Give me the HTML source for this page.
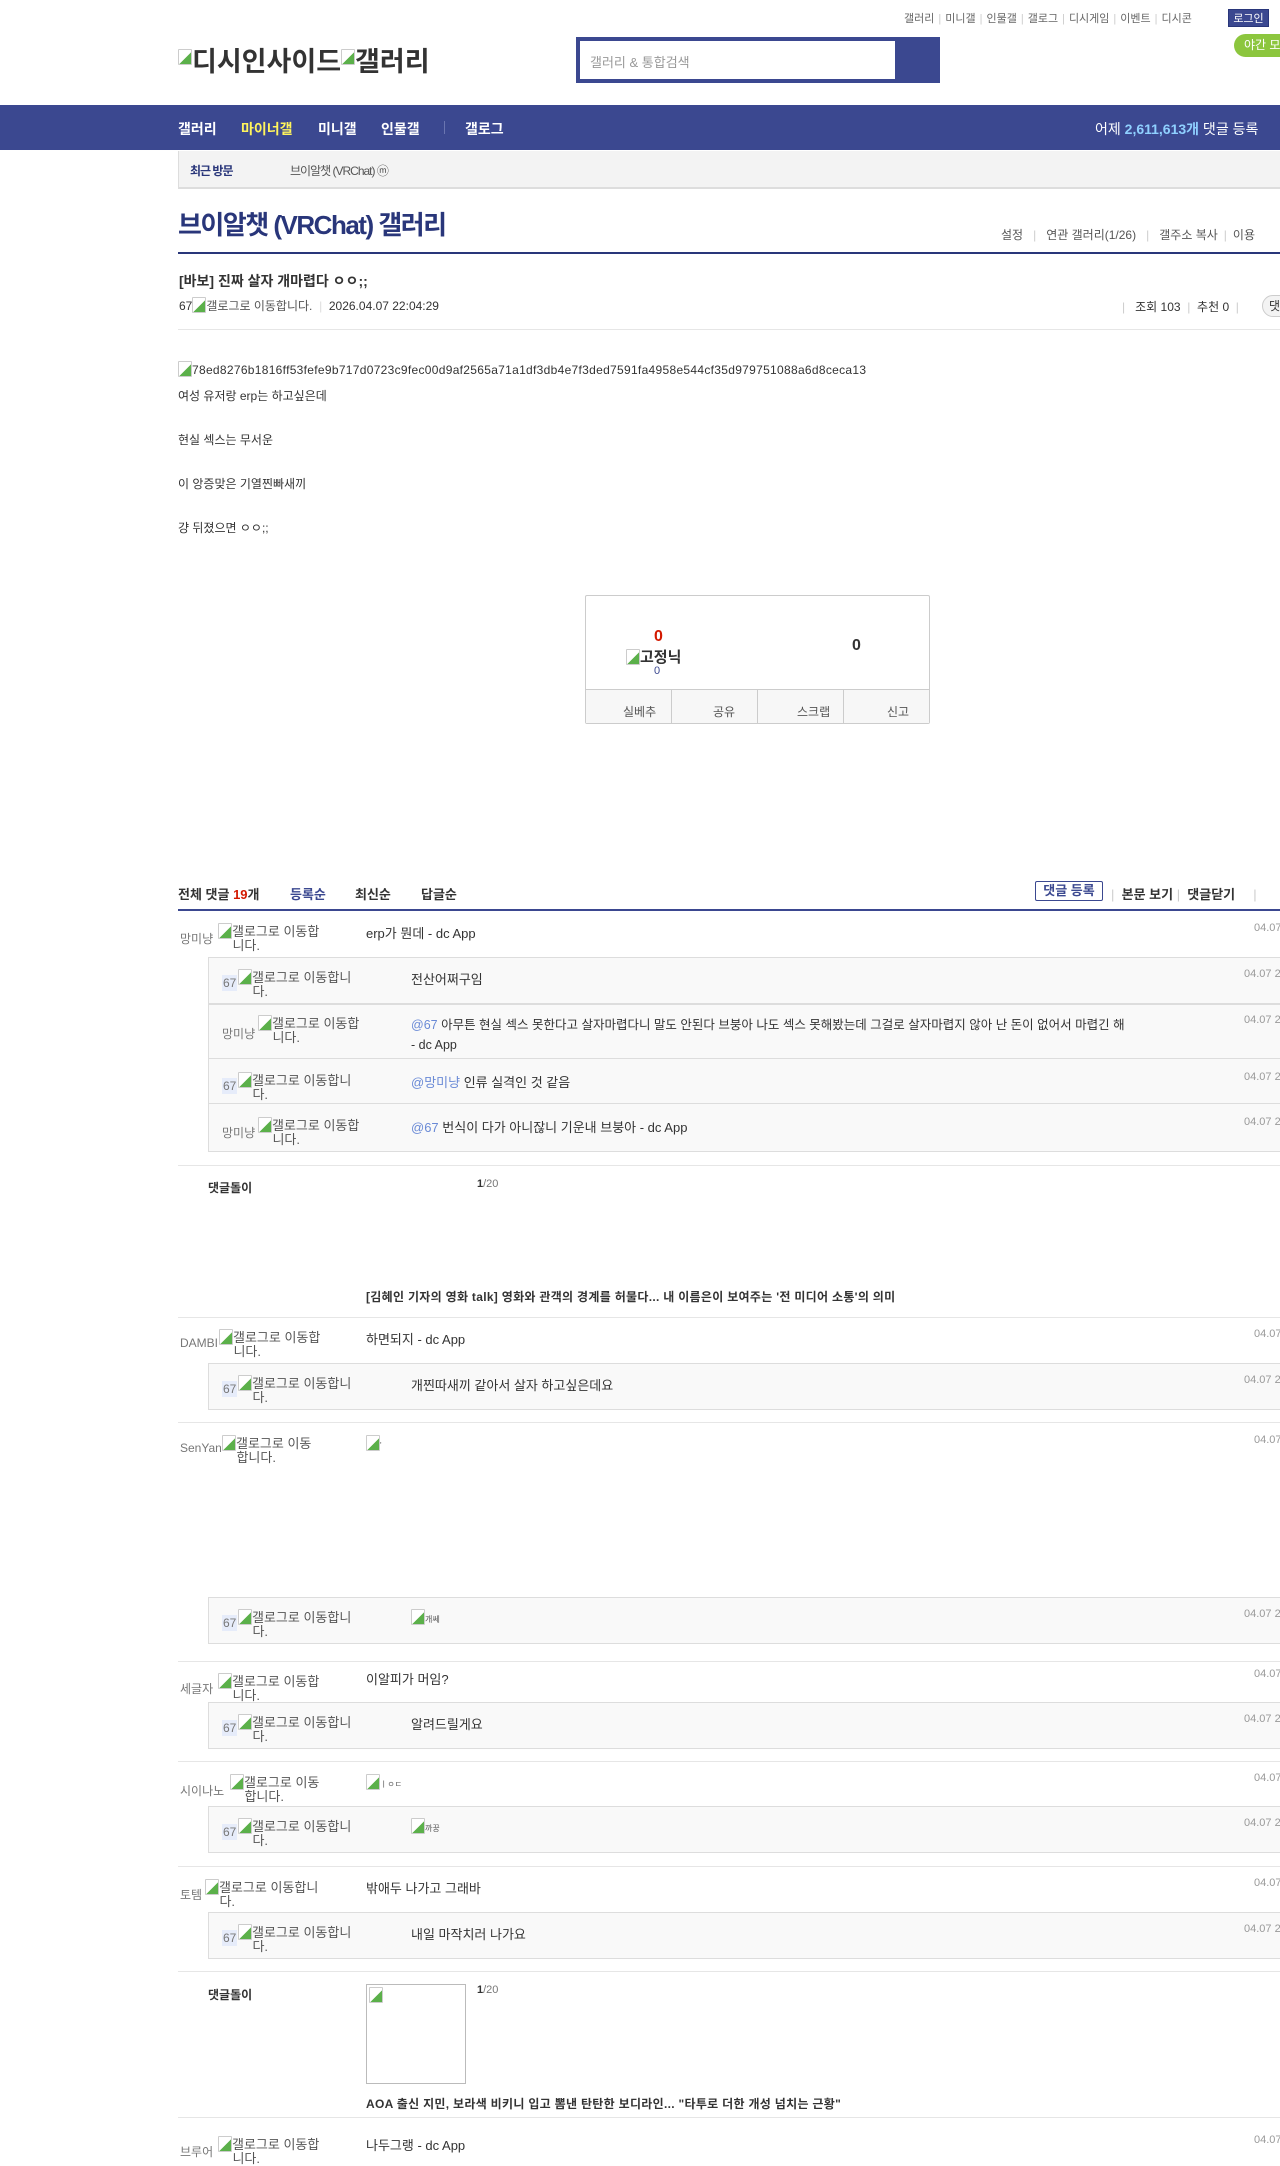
<!DOCTYPE html>
<html><head><meta charset="utf-8">
<style>
*{margin:0;padding:0;box-sizing:border-box}
body{width:1280px;height:2157px;overflow:hidden;position:relative;background:#fff;font-family:"Liberation Sans","Noto Sans CJK KR","NanumGothic",sans-serif;color:#333;font-size:13px}
.a{position:absolute;white-space:nowrap}
.bi{display:inline-block;width:14px;height:16px;border:1px solid #ccc;border-radius:1px;vertical-align:-3px;background:linear-gradient(135deg,#fff 55%,#5bb04a 56%);}
.sep{position:absolute;left:178px;right:0;height:1px;background:#e6e6e6}
.rb{position:absolute;left:208px;right:0;background:#f9f9f9;border:1px solid #ddd;border-right:0}
.nick{position:absolute;left:180px;font-size:12px;color:#777;white-space:nowrap}
.gl{position:absolute;font-size:13px;color:#555;line-height:14px;white-space:normal}
.dt{position:absolute;font-size:11px;color:#999;white-space:nowrap}
.tx{position:absolute;font-size:13px;color:#333;white-space:nowrap}
.m{color:#6a8ad6}
.n67{background:#e6ecfa;color:#777;font-size:12px;padding:1px 1px}
.tl span{color:#ccc;margin:0 4px}
</style></head><body>

<!-- top links -->
<div class="a tl" style="left:904px;top:10px;font-size:11px;color:#666">갤러리<span>|</span>미니갤<span>|</span>인물갤<span>|</span>갤로그<span>|</span>디시게임<span>|</span>이벤트<span>|</span>디시콘</div>
<div class="a" style="left:1228px;top:9px;width:41px;height:18px;background:#3b4890;color:#fff;font-size:11px;text-align:center;line-height:18px;border:1px solid #29367a">로그인</div>
<div class="a" style="left:1234px;top:34px;width:60px;height:23px;background:#8cc63e;border-radius:12px;color:#fff;font-size:12px;line-height:23px;padding-left:10px">야간 모드</div>

<!-- logo -->
<div class="a" style="left:178px;top:40px;font-size:27px;font-weight:bold;color:#333"><span class="bi" style="vertical-align:6px"></span>디시인사이드<span class="bi" style="vertical-align:6px"></span>갤러리</div>

<!-- search -->
<div class="a" style="left:576px;top:37px;width:364px;height:46px;background:#3b4890"></div>
<div class="a" style="left:580px;top:41px;width:315px;height:38px;background:#fff"></div>
<div class="a" style="left:590px;top:52px;font-size:13px;color:#999">갤러리 &amp; 통합검색</div>

<!-- nav -->
<div class="a" style="left:0;top:105px;width:1280px;height:45px;background:#3b4890"></div>
<div class="a" style="left:178px;top:119px;font-size:14px;font-weight:bold;color:#fff">갤러리</div>
<div class="a" style="left:241px;top:119px;font-size:14px;font-weight:bold;color:#fff45c">마이너갤</div>
<div class="a" style="left:318px;top:119px;font-size:14px;font-weight:bold;color:#fff">미니갤</div>
<div class="a" style="left:381px;top:119px;font-size:14px;font-weight:bold;color:#fff">인물갤</div>
<div class="a" style="left:444px;top:121px;width:1px;height:13px;background:#6a75b0"></div>
<div class="a" style="left:465px;top:119px;font-size:14px;font-weight:bold;color:#fff">갤로그</div>
<div class="a" style="left:1095px;top:119px;font-size:14px;color:#fff">어제 <b style="color:#8fd0ff">2,611,613개</b> 댓글 등록</div>

<!-- recent -->
<div class="a" style="left:178px;top:151px;width:1102px;height:38px;background:#f3f3f3;border-left:1px solid #ddd;border-bottom:2px solid #ddd"></div>
<div class="a" style="left:190px;top:162px;font-size:12px;font-weight:bold;color:#29367a;letter-spacing:-1px">최근 방문</div>
<div class="a" style="left:290px;top:162px;font-size:12px;color:#555;letter-spacing:-1px">브이알챗 (VRChat) ⓜ</div>

<!-- gallery title -->
<div class="a" style="left:178px;top:205px;font-size:26px;font-weight:bold;color:#29367a;letter-spacing:-1.5px">브이알챗 (VRChat) 갤러리</div>
<div class="a tl" style="left:1001px;top:226px;font-size:12px;color:#555">설정<span style="margin:0 10px">|</span>연관 갤러리(1/26)<span style="margin:0 10px">|</span>갤주소 복사<span style="margin:0 6px">|</span>이용</div>
<div class="a" style="left:178px;top:252px;width:1102px;height:2px;background:#29367a"></div>

<!-- post head -->
<div class="a" style="left:179px;top:271px;font-size:14px;font-weight:bold;color:#333">[바보] 진짜 살자 개마렵다 ㅇㅇ;;</div>
<div class="a" style="left:179px;top:297px;font-size:12px;color:#333">67<span class="bi"></span><span style="color:#555">갤로그로 이동합니다.</span> <span style="color:#ddd">&nbsp;|&nbsp;</span> 2026.04.07 22:04:29</div>
<div class="a" style="left:1122px;top:298px;font-size:12px;color:#333"><span style="color:#ccc">|</span>&nbsp;&nbsp; 조회 103 <span style="color:#ccc">&nbsp;|&nbsp;</span> 추천 0 <span style="color:#ccc">&nbsp;|</span></div>
<div class="a" style="left:1262px;top:295px;width:30px;height:22px;border:1px solid #ccc;border-radius:11px;background:#f3f3f3;font-size:12px;padding-left:6px;line-height:20px">댓</div>
<div class="a" style="left:178px;top:329px;width:1102px;height:1px;background:#e6e6e6"></div>

<!-- body -->
<div class="a" style="left:178px;top:361px;font-size:12px;color:#333;letter-spacing:0.3px"><span class="bi"></span>78ed8276b1816ff53fefe9b717d0723c9fec00d9af2565a71a1df3db4e7f3ded7591fa4958e544cf35d979751088a6d8ceca13</div>
<div class="a" style="left:178px;top:387px;font-size:12px">여성 유저랑 erp는 하고싶은데</div>
<div class="a" style="left:178px;top:431px;font-size:12px">현실 섹스는 무서운</div>
<div class="a" style="left:178px;top:475px;font-size:12px">이 앙증맞은 기열찐빠새끼</div>
<div class="a" style="left:178px;top:519px;font-size:12px">걍 뒤졌으면 ㅇㅇ;;</div>

<!-- vote box -->
<div class="a" style="left:585px;top:595px;width:345px;height:129px;border:1px solid #ccc;border-radius:2px"></div>
<div class="a" style="left:586px;top:689px;width:343px;height:34px;background:#f7f7f7;border-top:1px solid #ccc"></div>
<div class="a" style="left:671px;top:690px;width:1px;height:34px;background:#ccc"></div>
<div class="a" style="left:757px;top:690px;width:1px;height:34px;background:#ccc"></div>
<div class="a" style="left:843px;top:690px;width:1px;height:34px;background:#ccc"></div>
<div class="a" style="left:623px;top:703px;font-size:12px;color:#555">실베추</div>
<div class="a" style="left:713px;top:703px;font-size:12px;color:#555">공유</div>
<div class="a" style="left:797px;top:703px;font-size:12px;color:#555">스크랩</div>
<div class="a" style="left:887px;top:703px;font-size:12px;color:#555">신고</div>
<div class="a" style="left:654px;top:628px;font-size:16px;font-weight:bold;color:#d31900">0</div>
<div class="a" style="left:626px;top:646px;font-size:15px;font-weight:bold;color:#333"><span class="bi"></span>고정닉</div>
<div class="a" style="left:654px;top:665px;font-size:11px;color:#3b4890">0</div>
<div class="a" style="left:852px;top:637px;font-size:16px;font-weight:bold;color:#333">0</div>

<!-- comment header -->
<div class="a" style="left:178px;top:884px;font-size:13px;font-weight:bold;color:#333">전체 댓글 <span style="color:#d31900">19</span>개</div>
<div class="a" style="left:290px;top:884px;font-size:13px;font-weight:bold;color:#3b4890">등록순</div>
<div class="a" style="left:355px;top:884px;font-size:13px;font-weight:bold;color:#333">최신순</div>
<div class="a" style="left:421px;top:884px;font-size:13px;font-weight:bold;color:#333">답글순</div>
<div class="a" style="left:1035px;top:881px;width:68px;height:20px;border:1px solid #3b4890;border-radius:2px;font-size:13px;font-weight:bold;color:#3b4890;text-align:center;line-height:18px">댓글 등록</div>
<div class="a" style="left:1111px;top:884px;font-size:13px;font-weight:bold;color:#333"><span style="color:#ccc;font-weight:normal">|</span>&nbsp; 본문 보기 <span style="color:#ccc;font-weight:normal">|</span>&nbsp; 댓글닫기 &nbsp;&nbsp;&nbsp;&nbsp;<span style="color:#ccc;font-weight:normal">|</span></div>
<div class="a" style="left:178px;top:909px;width:1102px;height:2px;background:#3b4890"></div>

<!-- R1 -->
<div class="nick" style="top:930px">망미냥</div><div class="gl" style="left:218px;top:923px;width:112px"><span class="bi"></span>갤로그로 이동합<br>&nbsp;&nbsp;&nbsp;&nbsp;니다.</div>
<div class="tx" style="left:366px;top:923px">erp가 뭔데 - dc App</div><div class="dt" style="left:1254px;top:922px">04.07</div>

<div class="rb" style="top:957px;height:47px"></div>
<div class="a" style="left:222px;top:975px"><span class="n67">67</span></div><div class="gl" style="left:238px;top:969px;width:125px"><span class="bi"></span>갤로그로 이동합니<br>&nbsp;&nbsp;&nbsp;&nbsp;다.</div>
<div class="tx" style="left:411px;top:969px">전산어쩌구임</div><div class="dt" style="left:1244px;top:968px">04.07 2</div>

<div class="rb" style="top:1004px;height:55px"></div>
<div class="nick" style="left:222px;top:1025px">망미냥</div><div class="gl" style="left:258px;top:1015px;width:112px"><span class="bi"></span>갤로그로 이동합<br>&nbsp;&nbsp;&nbsp;&nbsp;니다.</div>
<div class="tx" style="left:411px;top:1015px;line-height:20px;font-size:12.5px"><span class="m">@67</span> 아무튼 현실 섹스 못한다고 살자마렵다니 말도 안된다 브붕아 나도 섹스 못해봤는데 그걸로 살자마렵지 않아 난 돈이 없어서 마렵긴 해<br>- dc App</div><div class="dt" style="left:1244px;top:1014px">04.07 2</div>

<div class="rb" style="top:1058px;height:46px"></div>
<div class="a" style="left:222px;top:1078px"><span class="n67">67</span></div><div class="gl" style="left:238px;top:1072px;width:125px"><span class="bi"></span>갤로그로 이동합니<br>&nbsp;&nbsp;&nbsp;&nbsp;다.</div>
<div class="tx" style="left:411px;top:1072px"><span class="m">@망미냥</span> 인류 실격인 것 같음</div><div class="dt" style="left:1244px;top:1071px">04.07 2</div>

<div class="rb" style="top:1103px;height:49px"></div>
<div class="nick" style="left:222px;top:1124px">망미냥</div><div class="gl" style="left:258px;top:1117px;width:112px"><span class="bi"></span>갤로그로 이동합<br>&nbsp;&nbsp;&nbsp;&nbsp;니다.</div>
<div class="tx" style="left:411px;top:1117px"><span class="m">@67</span> 번식이 다가 아니잖니 기운내 브붕아 - dc App</div><div class="dt" style="left:1244px;top:1116px">04.07 2</div>

<div class="sep" style="top:1165px"></div>
<div class="a" style="left:208px;top:1179px;font-size:12px;font-weight:bold;color:#333">댓글돌이</div>
<div class="a" style="left:477px;top:1178px;font-size:11px;color:#777"><b style="color:#333">1</b>/20</div>
<div class="a" style="left:366px;top:1288px;font-size:12px;font-weight:bold;color:#333;letter-spacing:0.3px">[김혜인 기자의 영화 talk] 영화와 관객의 경계를 허물다... 내 이름은이 보여주는 '전 미디어 소통'의 의미</div>

<!-- DAMBI -->
<div class="sep" style="top:1317px"></div>
<div class="nick" style="top:1336px">DAMBI</div><div class="gl" style="left:219px;top:1329px;width:112px"><span class="bi"></span>갤로그로 이동합<br>&nbsp;&nbsp;&nbsp;&nbsp;니다.</div>
<div class="tx" style="left:366px;top:1329px">하면되지 - dc App</div><div class="dt" style="left:1254px;top:1328px">04.07</div>
<div class="rb" style="top:1363px;height:47px"></div>
<div class="a" style="left:222px;top:1381px"><span class="n67">67</span></div><div class="gl" style="left:238px;top:1375px;width:125px"><span class="bi"></span>갤로그로 이동합니<br>&nbsp;&nbsp;&nbsp;&nbsp;다.</div>
<div class="tx" style="left:411px;top:1375px">개찐따새끼 같아서 살자 하고싶은데요</div><div class="dt" style="left:1244px;top:1374px">04.07 2</div>

<!-- SenYan -->
<div class="sep" style="top:1422px"></div>
<div class="nick" style="top:1441px">SenYan</div><div class="gl" style="left:222px;top:1435px;width:105px"><span class="bi"></span>갤로그로 이동<br>&nbsp;&nbsp;&nbsp;&nbsp;합니다.</div>
<div class="a" style="left:366px;top:1435px;font-size:8px;color:#555"><span class="bi"></span>'</div><div class="dt" style="left:1254px;top:1434px">04.07</div>
<div class="rb" style="top:1597px;height:47px"></div>
<div class="a" style="left:222px;top:1615px"><span class="n67">67</span></div><div class="gl" style="left:238px;top:1609px;width:125px"><span class="bi"></span>갤로그로 이동합니<br>&nbsp;&nbsp;&nbsp;&nbsp;다.</div>
<div class="a" style="left:411px;top:1609px;font-size:8px;color:#555"><span class="bi"></span>개쎄</div><div class="dt" style="left:1244px;top:1608px">04.07 2</div>

<!-- 세글자 -->
<div class="sep" style="top:1661px"></div>
<div class="nick" style="top:1680px">세글자</div><div class="gl" style="left:218px;top:1673px;width:112px"><span class="bi"></span>갤로그로 이동합<br>&nbsp;&nbsp;&nbsp;&nbsp;니다.</div>
<div class="tx" style="left:366px;top:1669px">이알피가 머임?</div><div class="dt" style="left:1254px;top:1668px">04.07</div>
<div class="rb" style="top:1702px;height:47px"></div>
<div class="a" style="left:222px;top:1720px"><span class="n67">67</span></div><div class="gl" style="left:238px;top:1714px;width:125px"><span class="bi"></span>갤로그로 이동합니<br>&nbsp;&nbsp;&nbsp;&nbsp;다.</div>
<div class="tx" style="left:411px;top:1714px">알려드릴게요</div><div class="dt" style="left:1244px;top:1713px">04.07 2</div>

<!-- 시이나노 -->
<div class="sep" style="top:1761px"></div>
<div class="nick" style="top:1782px">시이나노</div><div class="gl" style="left:230px;top:1774px;width:105px"><span class="bi"></span>갤로그로 이동<br>&nbsp;&nbsp;&nbsp;&nbsp;합니다.</div>
<div class="a" style="left:366px;top:1774px;font-size:8px;color:#555"><span class="bi"></span>ㅣㅇㄷ</div><div class="dt" style="left:1254px;top:1772px">04.07</div>
<div class="rb" style="top:1806px;height:47px"></div>
<div class="a" style="left:222px;top:1824px"><span class="n67">67</span></div><div class="gl" style="left:238px;top:1818px;width:125px"><span class="bi"></span>갤로그로 이동합니<br>&nbsp;&nbsp;&nbsp;&nbsp;다.</div>
<div class="a" style="left:411px;top:1818px;font-size:8px;color:#555"><span class="bi"></span>까꿍</div><div class="dt" style="left:1244px;top:1817px">04.07 2</div>

<!-- 토템 -->
<div class="sep" style="top:1866px"></div>
<div class="nick" style="top:1886px">토템</div><div class="gl" style="left:205px;top:1879px;width:125px"><span class="bi"></span>갤로그로 이동합니<br>&nbsp;&nbsp;&nbsp;&nbsp;다.</div>
<div class="tx" style="left:366px;top:1878px">밖애두 나가고 그래바</div><div class="dt" style="left:1254px;top:1877px">04.07</div>
<div class="rb" style="top:1912px;height:47px"></div>
<div class="a" style="left:222px;top:1930px"><span class="n67">67</span></div><div class="gl" style="left:238px;top:1924px;width:125px"><span class="bi"></span>갤로그로 이동합니<br>&nbsp;&nbsp;&nbsp;&nbsp;다.</div>
<div class="tx" style="left:411px;top:1924px">내일 마작치러 나가요</div><div class="dt" style="left:1244px;top:1923px">04.07 2</div>

<!-- 댓글돌이 2 -->
<div class="sep" style="top:1971px"></div>
<div class="a" style="left:208px;top:1986px;font-size:12px;font-weight:bold;color:#333">댓글돌이</div>
<div class="a" style="left:366px;top:1984px;width:100px;height:100px;border:1px solid #bbb;padding:2px"><span class="bi"></span></div>
<div class="a" style="left:477px;top:1984px;font-size:11px;color:#777"><b style="color:#333">1</b>/20</div>
<div class="a" style="left:366px;top:2095px;font-size:12px;font-weight:bold;color:#333;letter-spacing:0.3px">AOA 출신 지민, 보라색 비키니 입고 뽐낸 탄탄한 보디라인... "타투로 더한 개성 넘치는 근황"</div>

<!-- 브루어 -->
<div class="sep" style="top:2117px"></div>
<div class="nick" style="top:2143px">브루어</div><div class="gl" style="left:218px;top:2136px;width:112px"><span class="bi"></span>갤로그로 이동합<br>&nbsp;&nbsp;&nbsp;&nbsp;니다.</div>
<div class="tx" style="left:366px;top:2135px">나두그랭 - dc App</div><div class="dt" style="left:1254px;top:2134px">04.07</div>

</body></html>
